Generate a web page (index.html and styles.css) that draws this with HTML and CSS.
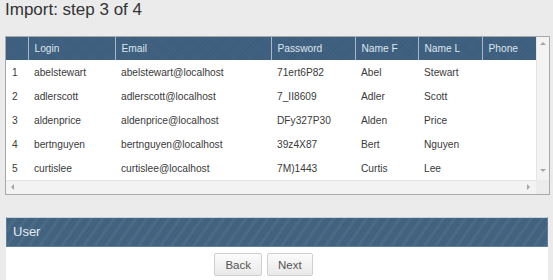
FILE: index.html
```html
<!DOCTYPE html>
<html lang="en">
<head>
  <meta charset="UTF-8">
  <meta name="viewport" content="width=device-width, initial-scale=1">
  <title>Import: step 3 of 4</title>
  <link rel="stylesheet" href="styles.css">
</head>
<body>
  <h1 class="page-title">Import: step 3 of 4</h1>

  <div class="grid-box">
    <div class="grid-view">
      <table class="data-grid">
        <colgroup>
          <col class="col-num">
          <col class="col-login">
          <col class="col-email">
          <col class="col-pass">
          <col class="col-first">
          <col class="col-last">
          <col class="col-phone">
        </colgroup>
        <thead>
          <tr>
            <th></th>
            <th>Login</th>
            <th>Email</th>
            <th>Password</th>
            <th>Name F</th>
            <th>Name L</th>
            <th>Phone</th>
          </tr>
        </thead>
        <tbody>
          <tr><td>1</td><td>abelstewart</td><td>abelstewart@localhost</td><td>71ert6P82</td><td>Abel</td><td>Stewart</td><td></td></tr>
          <tr><td>2</td><td>adlerscott</td><td>adlerscott@localhost</td><td>7_II8609</td><td>Adler</td><td>Scott</td><td></td></tr>
          <tr><td>3</td><td>aldenprice</td><td>aldenprice@localhost</td><td>DFy327P30</td><td>Alden</td><td>Price</td><td></td></tr>
          <tr><td>4</td><td>bertnguyen</td><td>bertnguyen@localhost</td><td>39z4X87</td><td>Bert</td><td>Nguyen</td><td></td></tr>
          <tr><td>5</td><td>curtislee</td><td>curtislee@localhost</td><td>7M)1443</td><td>Curtis</td><td>Lee</td><td></td></tr>
        </tbody>
      </table>
    </div>
    <div class="vscroll">
      <span class="arrow arrow-up"></span>
      <span class="arrow arrow-down"></span>
    </div>
    <div class="hscroll">
      <span class="arrow arrow-left"></span>
      <span class="arrow arrow-right"></span>
    </div>
    <div class="scroll-corner"></div>
  </div>

  <div class="panel">
    <div class="panel-header">User</div>
    <div class="panel-body">
      <button class="btn">Back</button>
      <button class="btn">Next</button>
    </div>
  </div>
</body>
</html>
```

FILE: styles.css
```css
body, html {
  margin: 0;
  padding: 0;
  background-color: #ebebeb;
  font-family: "Liberation Sans", Arial, sans-serif;
  color: #333;
}
.page-title {
  margin: 0;
  padding-left: 5px;
  font-size: 17px;
  font-weight: normal;
  line-height: 20px;
  color: #333;
}

/* Grid box with fake scrollbars */
.grid-box {
  display: grid;
  grid-template-columns: 530px 13px;
  grid-template-rows: 143px 14px;
  width: 543px;
  margin: 16px 0 0 5px;
  border: 1px solid #a9a9a9;
  background-color: #fff;
}
.grid-view {
  overflow: hidden;
}
.data-grid {
  width: 530px;
  table-layout: fixed;
  border-collapse: collapse;
  font-size: 10.2px;
}
.col-num { width: 22px; }
.col-login { width: 87px; }
.col-email { width: 156px; }
.col-pass { width: 84px; }
.col-first { width: 63px; }
.col-last { width: 64px; }
.col-phone { width: 54px; }
.data-grid th {
  height: 23px;
  padding: 0 0 0 6px;
  text-align: left;
  font-weight: normal;
  color: #dde6ee;
  background-color: #3e5f7f;
  background-image:
    repeating-linear-gradient(45deg, rgba(255,255,255,0.025) 0 1px, transparent 1px 3px),
    repeating-linear-gradient(-45deg, rgba(0,0,0,0.03) 0 1px, transparent 1px 3px);
  border-left: 1px solid #a7b8c8;
}
.data-grid th:first-child {
  border-left: none;
}
.data-grid td {
  height: 24px;
  padding: 0 0 0 6px;
  color: #3a3a3a;
  white-space: nowrap;
}

.vscroll, .hscroll {
  position: relative;
  background-color: #f3f3f3;
}
.vscroll {
  border-left: 1px solid #e4e4e4;
}
.hscroll {
  border-top: 1px solid #e4e4e4;
}
.scroll-corner {
  background-color: #ececec;
}
/* tiny scrollbar arrows overlaid on the tracks */
.arrow {
  position: absolute;
  width: 0;
  height: 0;
  border: 3px solid transparent;
}
.arrow-up {
  top: 2px;
  left: 3px;
  border-bottom-color: #a6a6a6;
}
.arrow-down {
  bottom: 5px;
  left: 3px;
  border-top-color: #a6a6a6;
}
.arrow-left {
  top: 3px;
  left: 2px;
  border-right-color: #a6a6a6;
}
.arrow-right {
  top: 3px;
  right: 3px;
  border-left-color: #a6a6a6;
}

/* User panel */
.panel {
  width: 542px;
  margin: 22px 0 0 6px;
}
.panel-header {
  height: 28px;
  padding-left: 6px;
  line-height: 28px;
  font-size: 13px;
  color: #e4ebf2;
  background-color: #42637f;
  background-image: repeating-linear-gradient(-55deg, rgba(255,255,255,0.045) 0 3px, transparent 3px 9px);
  border: 1px solid #5d7f9e;
  border-top-color: #c9d3dc;
}
.panel-body {
  display: flex;
  justify-content: center;
  gap: 5px;
  padding: 6px 27px 6px 0;
  background-color: #fff;
}
.btn {
  height: 23px;
  padding: 0 10px;
  font-family: "Liberation Sans", Arial, sans-serif;
  font-size: 11.5px;
  color: #555;
  background: linear-gradient(#fbfbfb, #e9e9e9);
  border: 1px solid #cfcfcf;
  border-radius: 2px;
}
```
